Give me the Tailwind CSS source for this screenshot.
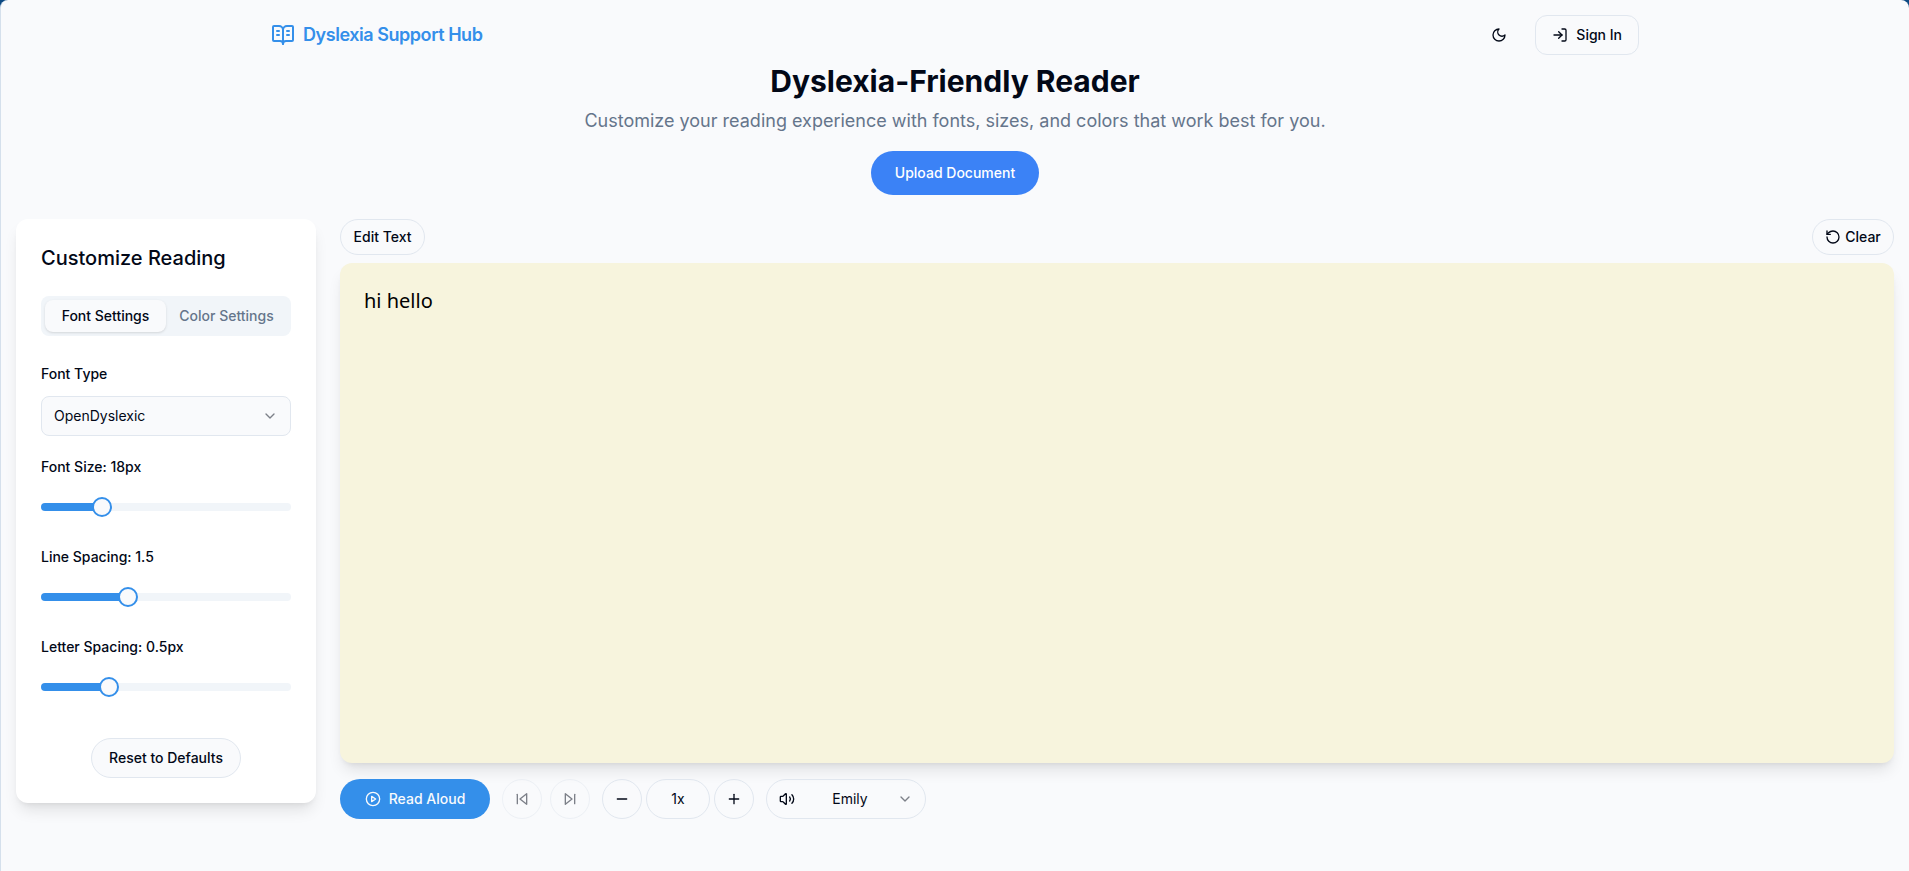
<!DOCTYPE html>
<html lang="en">
<head>
<meta charset="utf-8">
<meta name="viewport" content="width=device-width, initial-scale=1">
<title>Dyslexia Support Hub</title>
<script src="https://cdn.jsdelivr.net/npm/@tailwindcss/browser@4"></script>
</head>
<body class="bg-[#0d4a83] font-['Inter',sans-serif] text-sm text-[#020817]">
<div class="min-h-screen rounded-t-lg border-l border-[#d5e0ec] bg-[#f9fafc]">
  <header class="mx-auto flex max-w-[1400px] items-center justify-between px-4 pt-[15px]">
    <a href="#" class="flex items-center gap-2 text-lg font-semibold tracking-tight text-[#348fea]">
      <svg class="size-6" viewBox="0 0 24 24" fill="none" stroke="currentColor" stroke-width="2" stroke-linecap="round" stroke-linejoin="round"><path d="M12 7v14"/><path d="M16 12h2"/><path d="M16 8h2"/><path d="M3 18a1 1 0 0 1-1-1V4a1 1 0 0 1 1-1h5a4 4 0 0 1 4 4 4 4 0 0 1 4-4h5a1 1 0 0 1 1 1v13a1 1 0 0 1-1 1h-6a3 3 0 0 0-3 3 3 3 0 0 0-3-3z"/><path d="M6 12h2"/><path d="M6 8h2"/></svg>
      Dyslexia Support Hub
    </a>
    <div class="flex items-center gap-4">
      <button type="button" aria-label="Toggle theme" class="flex size-10 items-center justify-center rounded-lg">
        <svg class="size-4" viewBox="0 0 24 24" fill="none" stroke="currentColor" stroke-width="2" stroke-linecap="round" stroke-linejoin="round"><path d="M12 3a6 6 0 0 0 9 9 9 9 0 1 1-9-9Z"/></svg>
      </button>
      <button type="button" class="flex h-10 items-center gap-2 rounded-xl border border-[#e1e7ef] px-4 font-medium">
        <svg class="size-4" viewBox="0 0 24 24" fill="none" stroke="currentColor" stroke-width="2" stroke-linecap="round" stroke-linejoin="round"><path d="M15 3h4a2 2 0 0 1 2 2v14a2 2 0 0 1-2 2h-4"/><path d="m10 17 5-5-5-5"/><path d="M15 12H3"/></svg>
        Sign In
      </button>
    </div>
  </header>

  <main class="px-[15px]">
    <section class="flex flex-col items-center pt-2 text-center">
      <h1 class="text-3xl font-bold">Dyslexia-Friendly Reader</h1>
      <p class="mt-2 text-lg text-[#65758b]">Customize your reading experience with fonts, sizes, and colors that work best for you.</p>
      <button type="button" class="mt-4 h-11 rounded-full bg-[#3b82f6] px-6 font-medium text-white">Upload Document</button>
    </section>

    <div class="mt-6 flex items-start gap-6">
      <aside class="w-[300px] shrink-0 rounded-xl bg-white p-[25px] shadow-lg">
        <h2 class="text-xl font-medium">Customize Reading</h2>
        <div role="tablist" class="mt-6 flex h-10 rounded-lg bg-[#f1f5f9] p-1 font-medium">
          <button type="button" role="tab" aria-selected="true" class="flex-1 rounded-lg bg-[#f9fafc] whitespace-nowrap shadow-sm">Font Settings</button>
          <button type="button" role="tab" aria-selected="false" class="flex-1 whitespace-nowrap text-[#65758b]">Color Settings</button>
        </div>
        <label for="font" class="mt-7 block font-medium">Font Type</label>
        <div class="relative mt-3">
          <select id="font" class="h-10 w-full appearance-none rounded-lg border border-[#e1e7ef] bg-[#f9fafc] px-3"><option>OpenDyslexic</option></select>
          <svg class="pointer-events-none absolute top-3 right-[13px] size-4 opacity-50" viewBox="0 0 24 24" fill="none" stroke="currentColor" stroke-width="2" stroke-linecap="round" stroke-linejoin="round"><path d="m6 9 6 6 6-6"/></svg>
        </div>
        <div class="mt-5 flex h-[70px] flex-col">
          <label for="size" class="leading-[22px] font-medium">Font Size: 18px</label>
          <input id="size" type="range" min="14" max="32" value="18" style="background-size:24% 100%" class="mt-[25px] h-2 w-full appearance-none rounded-full bg-[#f1f5f9] bg-linear-to-r from-[#348fea] to-[#348fea] bg-no-repeat [&::-webkit-slider-thumb]:size-5 [&::-webkit-slider-thumb]:appearance-none [&::-webkit-slider-thumb]:rounded-full [&::-webkit-slider-thumb]:border-2 [&::-webkit-slider-thumb]:border-solid [&::-webkit-slider-thumb]:border-[#348fea] [&::-webkit-slider-thumb]:bg-[#f9fafc]">
        </div>
        <div class="mt-5 flex h-[70px] flex-col">
          <label for="line" class="leading-[22px] font-medium">Line Spacing: 1.5</label>
          <input id="line" type="range" min="1" max="2.5" step="0.1" value="1.5" style="background-size:35% 100%" class="mt-[25px] h-2 w-full appearance-none rounded-full bg-[#f1f5f9] bg-linear-to-r from-[#348fea] to-[#348fea] bg-no-repeat [&::-webkit-slider-thumb]:size-5 [&::-webkit-slider-thumb]:appearance-none [&::-webkit-slider-thumb]:rounded-full [&::-webkit-slider-thumb]:border-2 [&::-webkit-slider-thumb]:border-solid [&::-webkit-slider-thumb]:border-[#348fea] [&::-webkit-slider-thumb]:bg-[#f9fafc]">
        </div>
        <div class="mt-5 flex h-[70px] flex-col">
          <label for="letter" class="leading-[22px] font-medium">Letter Spacing: 0.5px</label>
          <input id="letter" type="range" min="0" max="2" step="0.1" value="0.5" style="background-size:27% 100%" class="mt-[25px] h-2 w-full appearance-none rounded-full bg-[#f1f5f9] bg-linear-to-r from-[#348fea] to-[#348fea] bg-no-repeat [&::-webkit-slider-thumb]:size-5 [&::-webkit-slider-thumb]:appearance-none [&::-webkit-slider-thumb]:rounded-full [&::-webkit-slider-thumb]:border-2 [&::-webkit-slider-thumb]:border-solid [&::-webkit-slider-thumb]:border-[#348fea] [&::-webkit-slider-thumb]:bg-[#f9fafc]">
        </div>
        <button type="button" class="mx-auto mt-8 block h-10 w-[150px] rounded-full border border-[#e1e7ef] bg-[#f9fafc] font-medium">Reset to Defaults</button>
      </aside>

      <section class="min-w-0 flex-1">
        <div class="flex items-center justify-between">
          <button type="button" class="h-9 w-[85px] rounded-full border border-[#e1e7ef] font-medium">Edit Text</button>
          <button type="button" class="flex h-9 w-[82px] items-center justify-center gap-1 rounded-full border border-[#e1e7ef] font-medium">
            <svg class="size-4" viewBox="0 0 24 24" fill="none" stroke="currentColor" stroke-width="2" stroke-linecap="round" stroke-linejoin="round"><path d="M3 12a9 9 0 1 0 9-9 9.75 9.75 0 0 0-6.74 2.74L3 8"/><path d="M3 3v5h5"/></svg>
            Clear
          </button>
        </div>
        <article class="mt-2 min-h-[500px] rounded-xl bg-[#f7f4dd] p-6 font-['Noto_Sans',sans-serif] text-xl text-black shadow-lg">hi hello</article>
        <div class="mt-4 flex items-center gap-3">
          <button type="button" class="flex h-10 w-[150px] items-center justify-center gap-2 rounded-full bg-[#348fea] font-medium text-[#f8fafc]">
            <svg class="size-4" viewBox="0 0 24 24" fill="none" stroke="currentColor" stroke-width="2" stroke-linecap="round" stroke-linejoin="round"><circle cx="12" cy="12" r="10"/><path d="m10 8 6 4-6 4z"/></svg>
            Read Aloud
          </button>
          <div class="flex gap-2">
            <button type="button" disabled aria-label="Previous" class="flex size-10 items-center justify-center rounded-full border border-[#e1e7ef] opacity-50">
              <svg class="size-4" viewBox="0 0 24 24" fill="none" stroke="currentColor" stroke-width="2" stroke-linecap="round" stroke-linejoin="round"><path d="M19 20 9 12l10-8z"/><path d="M5 19V5"/></svg>
            </button>
            <button type="button" disabled aria-label="Next" class="flex size-10 items-center justify-center rounded-full border border-[#e1e7ef] opacity-50">
              <svg class="size-4" viewBox="0 0 24 24" fill="none" stroke="currentColor" stroke-width="2" stroke-linecap="round" stroke-linejoin="round"><path d="m5 4 10 8-10 8z"/><path d="M19 5v14"/></svg>
            </button>
          </div>
          <div class="flex gap-1">
            <button type="button" aria-label="Slower" class="flex size-10 items-center justify-center rounded-full border border-[#e1e7ef]">
              <svg class="size-4" viewBox="0 0 24 24" fill="none" stroke="currentColor" stroke-width="2" stroke-linecap="round"><path d="M5 12h14"/></svg>
            </button>
            <button type="button" class="h-10 w-16 rounded-full border border-[#e1e7ef]">1x</button>
            <button type="button" aria-label="Faster" class="flex size-10 items-center justify-center rounded-full border border-[#e1e7ef]">
              <svg class="size-4" viewBox="0 0 24 24" fill="none" stroke="currentColor" stroke-width="2" stroke-linecap="round"><path d="M5 12h14"/><path d="M12 5v14"/></svg>
            </button>
          </div>
          <div class="relative w-40">
            <svg class="pointer-events-none absolute top-3 left-[13px] size-4" viewBox="0 0 24 24" fill="none" stroke="currentColor" stroke-width="2" stroke-linecap="round" stroke-linejoin="round"><path d="M11 4.7a.7.7 0 0 0-1.2-.5L6.4 7.6A1.4 1.4 0 0 1 5.4 8H3a1 1 0 0 0-1 1v6a1 1 0 0 0 1 1h2.4a1.4 1.4 0 0 1 1 .4l3.4 3.4a.7.7 0 0 0 1.2-.5z"/><path d="M16 9a5 5 0 0 1 0 6"/><path d="M19.4 18.4a9 9 0 0 0 0-12.7"/></svg>
            <select aria-label="Voice" class="h-10 w-full appearance-none rounded-full border border-[#e1e7ef] pr-8 pl-10 text-center"><option>Emily</option></select>
            <svg class="pointer-events-none absolute top-3 right-[13px] size-4 opacity-50" viewBox="0 0 24 24" fill="none" stroke="currentColor" stroke-width="2" stroke-linecap="round" stroke-linejoin="round"><path d="m6 9 6 6 6-6"/></svg>
          </div>
        </div>
      </section>
    </div>
  </main>
</div>
</body>
</html>
